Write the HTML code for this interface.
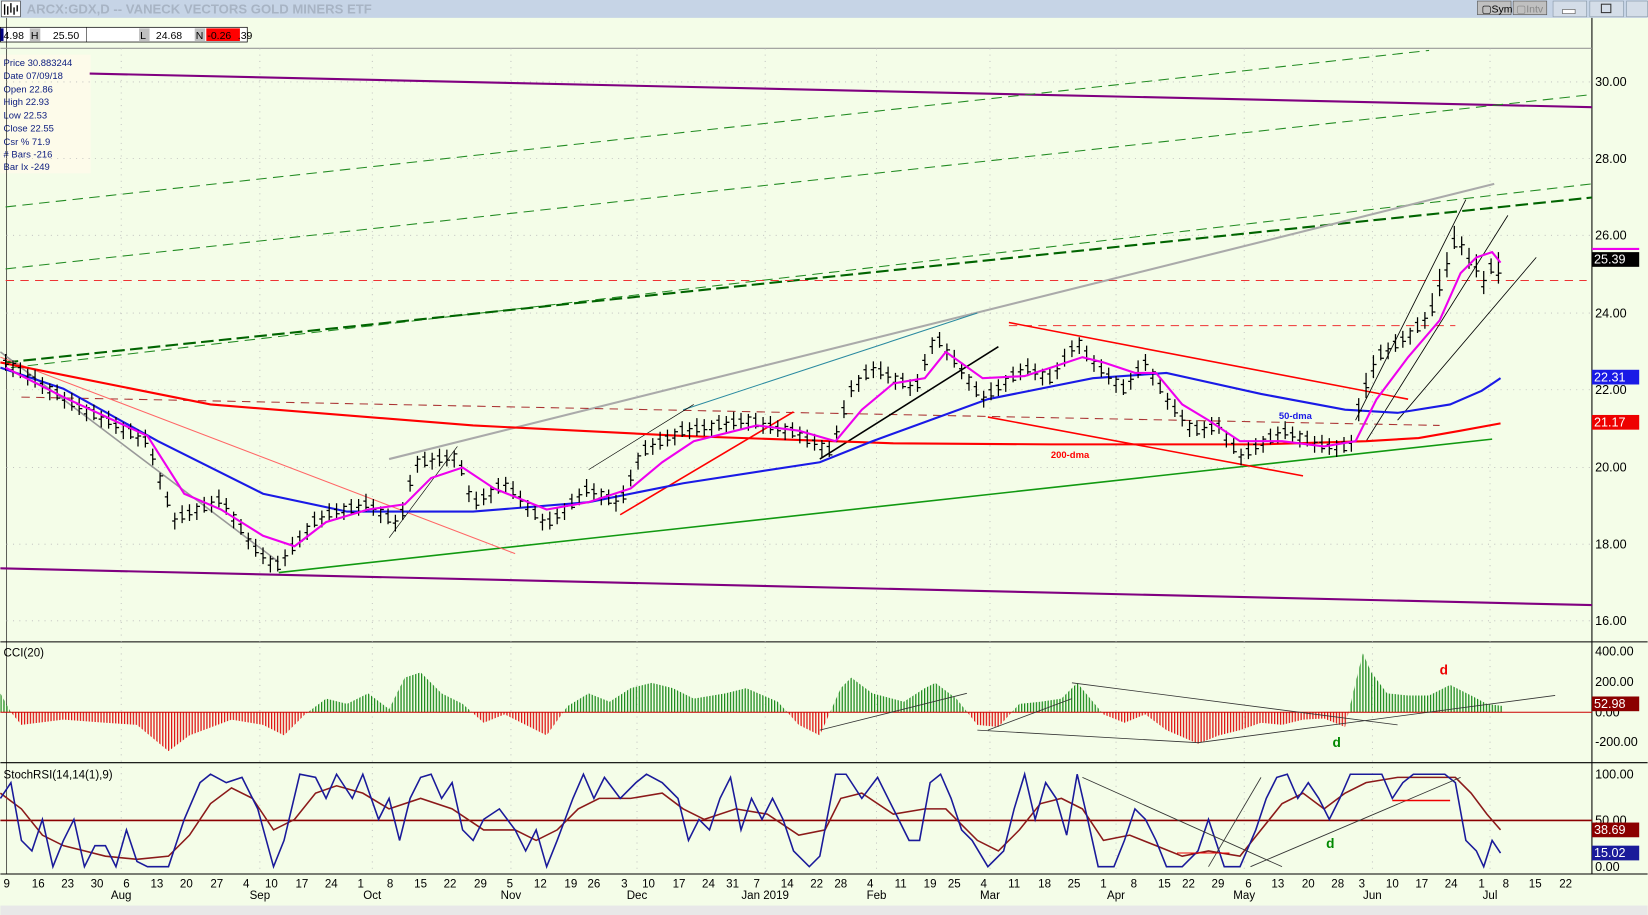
<!DOCTYPE html>
<html><head><meta charset="utf-8"><style>
html,body{margin:0;padding:0;background:#f4fde8;overflow:hidden}
svg{display:block;font-family:"Liberation Sans",sans-serif}
</style></head><body>
<svg width="1648" height="915" viewBox="0 0 1568 871" xmlns="http://www.w3.org/2000/svg">
<defs>
<pattern id="pg" width="2.8" height="10" patternUnits="userSpaceOnUse"><rect width="1.2" height="10" fill="#1a8a1a"/></pattern>
<pattern id="pr" width="2.8" height="10" patternUnits="userSpaceOnUse"><rect width="1.2" height="10" fill="#e01010"/></pattern>
<clipPath id="cu"><rect x="0" y="600" width="1515" height="78"/></clipPath>
<clipPath id="cd"><rect x="0" y="678" width="1515" height="60"/></clipPath>
</defs>
<rect width="1568" height="871" fill="#f4fde8"/>
<!-- title bar -->
<rect x="0" y="0" width="1568" height="17" fill="#c6d4e6"/>
<rect x="1" y="1" width="18" height="15" fill="#fff" stroke="#333" stroke-width="0.6"/>
<path d="M4 14V4M7 14V6M10 12V3M13 14V7M16 11V5" stroke="#000" stroke-width="1.3"/>
<text x="25" y="13" font-size="12.5" font-weight="bold" fill="#a8b4c4">ARCX:GDX,D -- VANECK VECTORS GOLD MINERS ETF</text>
<rect x="1406" y="1" width="32" height="13" fill="#c0c0c0" stroke="#555" stroke-width="0.6"/><text x="1410" y="12" font-size="10">▢Sym</text>
<rect x="1440" y="1" width="32" height="13" fill="#c0c0c0" stroke="#555" stroke-width="0.6"/><text x="1443" y="12" font-size="10" fill="#888">▢Intv</text>
<rect x="1478" y="1" width="32" height="15" fill="#d4dde8" stroke="#8899aa" stroke-width="0.6"/><rect x="1487" y="9" width="12" height="4" fill="#fff" stroke="#555" stroke-width="0.6"/>
<rect x="1513" y="1" width="32" height="15" fill="#d4dde8" stroke="#8899aa" stroke-width="0.6"/><rect x="1524" y="4" width="9" height="8" fill="none" stroke="#333" stroke-width="1"/>
<rect x="1548" y="1" width="20" height="15" fill="#d4dde8" stroke="#8899aa" stroke-width="0.6"/>
<!-- input row -->
<rect x="0" y="26" width="235" height="14" fill="#fff" stroke="#000" stroke-width="0.7"/>
<rect x="0" y="27" width="3" height="12" fill="#000080"/>
<text x="3" y="37" font-size="10">4.98</text>
<rect x="28" y="27" width="10" height="12" fill="#c0c0c0"/><text x="29" y="37" font-size="10">H</text>
<text x="50" y="37" font-size="10">25.50</text>
<line x1="82" y1="26" x2="82" y2="40" stroke="#000" stroke-width="0.5"/>
<rect x="132" y="27" width="10" height="12" fill="#c0c0c0"/><text x="133" y="37" font-size="10">L</text>
<text x="148" y="37" font-size="10">24.68</text>
<rect x="185" y="27" width="10" height="12" fill="#c0c0c0"/><text x="186" y="37" font-size="10">N</text>
<rect x="196" y="27" width="32" height="12" fill="#f00"/><text x="197" y="37" font-size="10">-0.26</text>
<text x="226" y="37" font-size="10">.39</text>
<rect x="0" y="52" width="86" height="113" fill="#fdfbea"/>
<g font-size="9" fill="#102080">
<text x="3" y="63">Price  30.883244</text><text x="3" y="75">Date  07/09/18</text><text x="3" y="88">Open  22.86</text><text x="3" y="100">High  22.93</text><text x="3" y="113">Low   22.53</text><text x="3" y="125">Close  22.55</text><text x="3" y="138">Csr %  71.9</text><text x="3" y="150"># Bars -216</text><text x="3" y="162">Bar Ix  -249</text>
</g>
<!-- panel borders -->
<g stroke="#000" stroke-width="1">
<line x1="1515" y1="17" x2="1515" y2="832"/>
<line x1="0" y1="611" x2="1568" y2="611"/>
<line x1="0" y1="726" x2="1568" y2="726"/>
<line x1="0" y1="832" x2="1568" y2="832"/>
<line x1="6" y1="17" x2="6" y2="832" stroke-width="0.6"/>
</g>
<line x1="0" y1="46" x2="1515" y2="46" stroke="#999"/>
<g stroke="#bbb" stroke-dasharray="1,5" stroke-width="0.8">
<path d="M6 78H1515M6 151H1515M6 224H1515M6 298H1515M6 371H1515M6 445H1515M6 518H1515M6 591H1515M115 46V832M247 46V832M354 46V832M486 46V832M606 46V832M728 46V832M834 46V832M942 46V832M1062 46V832M1184 46V832M1306 46V832M1418 46V832"/>
</g>
<!-- price axis -->
<g font-size="12" fill="#000">
<text x="1518" y="82">30.00</text><text x="1518" y="155">28.00</text><text x="1518" y="228">26.00</text><text x="1518" y="302">24.00</text><text x="1518" y="375">22.00</text><text x="1518" y="449">20.00</text><text x="1518" y="522">18.00</text><text x="1518" y="595">16.00</text>
</g>
<!-- trend lines -->
<g fill="none">
<line x1="85" y1="70" x2="1515" y2="102" stroke="#800080" stroke-width="2"/>
<line x1="0" y1="541" x2="1515" y2="576" stroke="#800080" stroke-width="2"/>
<line x1="5" y1="197" x2="1360" y2="48" stroke="#228b22" stroke-dasharray="10,6"/>
<line x1="5" y1="256" x2="1515" y2="90" stroke="#228b22" stroke-dasharray="10,6"/>
<line x1="10" y1="350" x2="1515" y2="175" stroke="#228b22" stroke-dasharray="10,6"/>
<line x1="5" y1="345" x2="1515" y2="188" stroke="#006400" stroke-width="2" stroke-dasharray="12,5"/>
<line x1="370" y1="437" x2="1422" y2="175" stroke="#aaa" stroke-width="2"/>
<line x1="265" y1="545" x2="1420" y2="418" stroke="#119911" stroke-width="1.5"/>
<line x1="5" y1="267" x2="1510" y2="267" stroke="#e33" stroke-dasharray="8,6"/>
<line x1="960" y1="310" x2="1385" y2="310" stroke="#e33" stroke-dasharray="8,6"/>
<line x1="20" y1="378" x2="1370" y2="405" stroke="#a33" stroke-dasharray="8,6"/>
<line x1="960" y1="307" x2="1340" y2="380" stroke="#f00" stroke-width="1.5"/>
<line x1="940" y1="397" x2="1240" y2="453" stroke="#f00" stroke-width="1.5"/>
<line x1="0" y1="340" x2="490" y2="527" stroke="#f66"/>
<line x1="0" y1="335" x2="265" y2="535" stroke="#999" stroke-width="1.5"/>
<line x1="590" y1="490" x2="755" y2="392" stroke="#f00" stroke-width="1.5"/>
<line x1="780" y1="437" x2="950" y2="330" stroke="#000" stroke-width="1.5"/>
<line x1="650" y1="390" x2="930" y2="298" stroke="#2a8aa0"/>
<line x1="1290" y1="400" x2="1395" y2="190" stroke="#000" stroke-width="0.8"/>
<line x1="1300" y1="420" x2="1435" y2="205" stroke="#000" stroke-width="0.8"/>
<line x1="1330" y1="400" x2="1462" y2="245" stroke="#000" stroke-width="0.8"/>
<line x1="370" y1="512" x2="435" y2="425" stroke="#000" stroke-width="0.6"/>
<line x1="560" y1="447" x2="660" y2="385" stroke="#000" stroke-width="0.6"/>
<polyline points="0,345 200,385 450,405 650,415 850,422 1000,423 1200,423 1300,420 1350,417 1390,410 1428,403" stroke="#f00" stroke-width="2"/>
<polyline points="0,350 60,370 150,420 250,470 330,487 450,487 560,478 650,460 780,440 830,420 940,380 1040,360 1110,355 1200,375 1280,390 1330,393 1380,385 1410,372 1428,360" stroke="#1a1ae6" stroke-width="2"/>
</g>
<!-- price bars -->
<path fill="none" stroke="#000" stroke-width="1.2" d="
M5 337v16m0-6h3m-5.5-4h2.5 M12 343v16m0-13h3m-5.5 6h2.5 M19 345v15m0-2h3m-5.5-8h2.5 M26 351v16m0-10h3m-5.5 2h2.5 M33 352v17m0-4h3m-5.5-6h2.5
M40 359v16m0-6h3m-5.5-4h2.5 M47 365v16m0-13h3m-5.5 6h2.5 M54 366v15m0-2h3m-5.5-8h2.5 M61 373v16m0-10h3m-5.5 2h2.5 M68 374v17m0-4h3m-5.5-6h2.5
M75 379v16m0-6h3m-5.5-4h2.5 M82 385v16m0-13h3m-5.5 6h2.5 M89 385v15m0-2h3m-5.5-8h2.5 M96 391v16m0-10h3m-5.5 2h2.5 M103 391v17m0-4h3m-5.5-6h2.5
M110 397v16m0-6h3m-5.5-4h2.5 M117 402v16m0-13h3m-5.5 6h2.5 M124 403v15m0-2h3m-5.5-8h2.5 M131 409v16m0-10h3m-5.5 2h2.5 M138 409v17m0-4h3m-5.5-6h2.5
M145 427v16m0-6h3m-5.5-4h2.5 M152 450v16m0-13h3m-5.5 6h2.5 M159 468v15m0-2h3m-5.5-8h2.5 M166 488v16m0-10h3m-5.5 2h2.5 M173 481v17m0-4h3m-5.5-6h2.5
M180 480v16m0-6h3m-5.5-4h2.5 M187 479v16m0-13h3m-5.5 6h2.5 M194 473v15m0-2h3m-5.5-8h2.5 M201 472v16m0-10h3m-5.5 2h2.5 M208 466v17m0-4h3m-5.5-6h2.5
M215 474v16m0-6h3m-5.5-4h2.5 M222 487v16m0-13h3m-5.5 6h2.5 M229 494v15m0-2h3m-5.5-8h2.5 M236 507v16m0-10h3m-5.5 2h2.5 M243 513v17m0-4h3m-5.5-6h2.5
M250 521v16m0-6h3m-5.5-4h2.5 M257 529v16m0-13h3m-5.5 6h2.5 M264 529v15m0-2h3m-5.5-8h2.5 M271 523v16m0-10h3m-5.5 2h2.5 M278 511v17m0-4h3m-5.5-6h2.5
M285 505v16m0-6h3m-5.5-4h2.5 M292 498v16m0-13h3m-5.5 6h2.5 M299 487v15m0-2h3m-5.5-8h2.5 M306 486v16m0-10h3m-5.5 2h2.5 M313 479v17m0-4h3m-5.5-6h2.5
M320 479v16m0-6h3m-5.5-4h2.5 M327 479v16m0-13h3m-5.5 6h2.5 M334 475v15m0-2h3m-5.5-8h2.5 M341 475v16m0-10h3m-5.5 2h2.5 M348 470v17m0-4h3m-5.5-6h2.5
M355 475v16m0-6h3m-5.5-4h2.5 M362 482v16m0-13h3m-5.5 6h2.5 M369 484v15m0-2h3m-5.5-8h2.5 M376 490v16m0-10h3m-5.5 2h2.5 M383 478v17m0-4h3m-5.5-6h2.5
M390 452v16m0-6h3m-5.5-4h2.5 M397 434v16m0-13h3m-5.5 6h2.5 M404 430v15m0-2h3m-5.5-8h2.5 M411 431v16m0-10h3m-5.5 2h2.5 M418 427v17m0-4h3m-5.5-6h2.5
M425 428v16m0-6h3m-5.5-4h2.5 M432 429v16m0-13h3m-5.5 6h2.5 M439 438v15m0-2h3m-5.5-8h2.5 M446 462v16m0-10h3m-5.5 2h2.5 M453 468v17m0-4h3m-5.5-6h2.5
M460 465v16m0-6h3m-5.5-4h2.5 M467 463v16m0-13h3m-5.5 6h2.5 M474 455v15m0-2h3m-5.5-8h2.5 M481 454v16m0-10h3m-5.5 2h2.5 M488 458v17m0-4h3m-5.5-6h2.5
M495 467v16m0-6h3m-5.5-4h2.5 M502 476v16m0-13h3m-5.5 6h2.5 M509 480v15m0-2h3m-5.5-8h2.5 M516 489v16m0-10h3m-5.5 2h2.5 M523 487v17m0-4h3m-5.5-6h2.5
M530 483v16m0-6h3m-5.5-4h2.5 M537 479v16m0-13h3m-5.5 6h2.5 M544 470v15m0-2h3m-5.5-8h2.5 M551 465v16m0-10h3m-5.5 2h2.5 M558 456v17m0-4h3m-5.5-6h2.5
M565 460v16m0-6h3m-5.5-4h2.5 M572 465v16m0-13h3m-5.5 6h2.5 M579 466v15m0-2h3m-5.5-8h2.5 M586 471v16m0-10h3m-5.5 2h2.5 M593 462v17m0-4h3m-5.5-6h2.5
M600 447v16m0-6h3m-5.5-4h2.5 M607 431v16m0-13h3m-5.5 6h2.5 M614 419v15m0-2h3m-5.5-8h2.5 M621 417v16m0-10h3m-5.5 2h2.5 M628 411v17m0-4h3m-5.5-6h2.5
M635 409v16m0-6h3m-5.5-4h2.5 M642 408v16m0-13h3m-5.5 6h2.5 M649 401v15m0-2h3m-5.5-8h2.5 M656 402v16m0-10h3m-5.5 2h2.5 M663 398v17m0-4h3m-5.5-6h2.5
M670 399v16m0-6h3m-5.5-4h2.5 M677 400v16m0-13h3m-5.5 6h2.5 M684 395v15m0-2h3m-5.5-8h2.5 M691 396v16m0-10h3m-5.5 2h2.5 M698 392v17m0-4h3m-5.5-6h2.5
M705 393v16m0-6h3m-5.5-4h2.5 M712 394v16m0-13h3m-5.5 6h2.5 M719 393v15m0-2h3m-5.5-8h2.5 M726 397v16m0-10h3m-5.5 2h2.5 M733 396v17m0-4h3m-5.5-6h2.5
M740 400v16m0-6h3m-5.5-4h2.5 M747 403v16m0-13h3m-5.5 6h2.5 M754 402v15m0-2h3m-5.5-8h2.5 M761 406v16m0-10h3m-5.5 2h2.5 M768 409v17m0-4h3m-5.5-6h2.5
M775 413v16m0-6h3m-5.5-4h2.5 M782 419v16m0-13h3m-5.5 6h2.5 M789 420v15m0-2h3m-5.5-8h2.5 M796 405v16m0-10h3m-5.5 2h2.5 M803 381v17m0-4h3m-5.5-6h2.5
M810 362v16m0-6h3m-5.5-4h2.5 M817 357v16m0-13h3m-5.5 6h2.5 M824 347v15m0-2h3m-5.5-8h2.5 M831 344v16m0-10h3m-5.5 2h2.5 M838 344v17m0-4h3m-5.5-6h2.5
M845 349v16m0-6h3m-5.5-4h2.5 M852 355v16m0-13h3m-5.5 6h2.5 M859 355v15m0-2h3m-5.5-8h2.5 M866 361v16m0-10h3m-5.5 2h2.5 M873 356v17m0-4h3m-5.5-6h2.5
M880 337v16m0-6h3m-5.5-4h2.5 M887 321v16m0-13h3m-5.5 6h2.5 M894 316v15m0-2h3m-5.5-8h2.5 M901 327v16m0-10h3m-5.5 2h2.5 M908 333v17m0-4h3m-5.5-6h2.5
M915 345v16m0-6h3m-5.5-4h2.5 M922 356v16m0-13h3m-5.5 6h2.5 M929 363v15m0-2h3m-5.5-8h2.5 M936 372v16m0-10h3m-5.5 2h2.5 M943 364v17m0-4h3m-5.5-6h2.5
M950 361v16m0-6h3m-5.5-4h2.5 M957 357v16m0-13h3m-5.5 6h2.5 M964 349v15m0-2h3m-5.5-8h2.5 M971 346v16m0-10h3m-5.5 2h2.5 M978 341v17m0-4h3m-5.5-6h2.5
M985 346v16m0-6h3m-5.5-4h2.5 M992 351v16m0-13h3m-5.5 6h2.5 M999 351v15m0-2h3m-5.5-8h2.5 M1006 345v16m0-10h3m-5.5 2h2.5 M1013 332v17m0-4h3m-5.5-6h2.5
M1020 324v16m0-6h3m-5.5-4h2.5 M1027 321v16m0-13h3m-5.5 6h2.5 M1034 329v15m0-2h3m-5.5-8h2.5 M1041 338v16m0-10h3m-5.5 2h2.5 M1048 342v17m0-4h3m-5.5-6h2.5
M1055 350v16m0-6h3m-5.5-4h2.5 M1062 358v16m0-13h3m-5.5 6h2.5 M1069 361v15m0-2h3m-5.5-8h2.5 M1076 355v16m0-10h3m-5.5 2h2.5 M1083 343v17m0-4h3m-5.5-6h2.5
M1090 337v16m0-6h3m-5.5-4h2.5 M1097 351v16m0-13h3m-5.5 6h2.5 M1104 360v15m0-2h3m-5.5-8h2.5 M1111 374v16m0-10h3m-5.5 2h2.5 M1118 380v17m0-4h3m-5.5-6h2.5
M1125 390v16m0-6h3m-5.5-4h2.5 M1132 400v16m0-13h3m-5.5 6h2.5 M1139 400v15m0-2h3m-5.5-8h2.5 M1146 401v16m0-10h3m-5.5 2h2.5 M1153 397v17m0-4h3m-5.5-6h2.5
M1160 397v16m0-6h3m-5.5-4h2.5 M1167 410v16m0-13h3m-5.5 6h2.5 M1174 417v15m0-2h3m-5.5-8h2.5 M1181 427v16m0-10h3m-5.5 2h2.5 M1188 420v17m0-4h3m-5.5-6h2.5
M1195 417v16m0-6h3m-5.5-4h2.5 M1202 415v16m0-13h3m-5.5 6h2.5 M1209 408v15m0-2h3m-5.5-8h2.5 M1216 406v16m0-10h3m-5.5 2h2.5 M1223 401v17m0-4h3m-5.5-6h2.5
M1230 406v16m0-6h3m-5.5-4h2.5 M1237 410v16m0-13h3m-5.5 6h2.5 M1244 410v15m0-2h3m-5.5-8h2.5 M1251 415v16m0-10h3m-5.5 2h2.5 M1258 414v17m0-4h3m-5.5-6h2.5
M1265 417v16m0-6h3m-5.5-4h2.5 M1272 419v16m0-13h3m-5.5 6h2.5 M1279 416v15m0-2h3m-5.5-8h2.5 M1286 414v16m0-10h3m-5.5 2h2.5 M1293 379v22m0-10h3m-5.5-6h2.5
M1300 355v24m0-10h3m-5.5-4h2.5 M1307 338v22m0-13h3m-5.5 6h2.5 M1314 328v15m0-2h3m-5.5-8h2.5 M1321 326v16m0-10h3m-5.5 2h2.5 M1328 318v17m0-4h3m-5.5-6h2.5
M1335 315v16m0-6h3m-5.5-4h2.5 M1342 312v16m0-13h3m-5.5 6h2.5 M1349 302v15m0-2h3m-5.5-8h2.5 M1356 297v16m0-10h3m-5.5 2h2.5 M1363 279v22m0-4h3m-5.5-6h2.5
M1370 256v26m0-6h3m-5.5-4h2.5 M1377 240v24m0-13h3m-5.5 6h2.5 M1384 215v22m0-2h3m-5.5-8h2.5 M1391 225v18m0-10h3m-5.5 2h2.5 M1398 236v20m0-4h3m-5.5-6h2.5
M1405 242v22m0-6h3m-5.5-4h2.5 M1412 258v22m0-13h3m-5.5 6h2.5 M1419 246v15m0-2h3m-5.5-8h2.5 M1426 240v30m0-10h3m-5.5 2h2.5"/>
<polyline fill="none" stroke="#ee00ee" stroke-width="2" points="5,350 60,378 140,415 175,470 210,485 250,510 280,520 310,497 350,485 385,480 410,455 440,445 470,465 520,485 560,478 600,465 630,440 660,420 720,405 760,410 795,420 820,390 850,365 880,360 900,335 935,360 975,358 1000,350 1030,340 1050,345 1080,355 1100,355 1125,385 1150,400 1180,420 1220,420 1260,425 1290,420 1310,380 1340,340 1370,305 1390,260 1405,245 1420,240 1428,250"/>
<text x="1000" y="436" font-size="9" font-weight="bold" fill="#f00">200-dma</text>
<text x="1217" y="399" font-size="9" font-weight="bold" fill="#1a1ae6">50-dma</text>
<line x1="1515" y1="237" x2="1560" y2="237" stroke="#ee00ee" stroke-width="2"/>
<rect x="1515" y="240" width="45" height="14" fill="#000"/><text x="1517" y="251" font-size="12" fill="#fff">25.39</text>
<rect x="1515" y="352" width="45" height="14" fill="#1a1ae6"/><text x="1517" y="363" font-size="12" fill="#fff">22.31</text>
<rect x="1515" y="395" width="45" height="14" fill="#e00"/><text x="1517" y="406" font-size="12" fill="#fff">21.17</text>
<!-- CCI -->
<text x="3" y="625" font-size="11">CCI(20)</text>
<g>
<polygon id="cc" points="0,678 0,660 10,678 20,690 60,685 100,688 130,690 160,715 180,700 220,685 250,690 270,700 290,680 310,665 330,670 350,660 370,675 385,645 400,640 420,660 440,670 460,688 480,680 500,690 520,700 540,672 560,660 580,668 600,655 620,650 640,655 660,665 690,660 710,655 740,668 760,690 780,700 800,655 810,645 830,660 860,668 880,655 890,650 910,665 930,690 950,692 970,670 990,668 1010,665 1025,650 1050,680 1070,688 1090,680 1110,695 1140,708 1160,700 1180,695 1200,688 1220,690 1240,685 1260,684 1280,692 1290,650 1297,622 1305,640 1320,660 1340,662 1360,662 1380,652 1400,662 1415,670 1430,672 1430,678" fill="url(#pg)" clip-path="url(#cu)"/>
<polygon points="0,678 0,660 10,678 20,690 60,685 100,688 130,690 160,715 180,700 220,685 250,690 270,700 290,680 310,665 330,670 350,660 370,675 385,645 400,640 420,660 440,670 460,688 480,680 500,690 520,700 540,672 560,660 580,668 600,655 620,650 640,655 660,665 690,660 710,655 740,668 760,690 780,700 800,655 810,645 830,660 860,668 880,655 890,650 910,665 930,690 950,692 970,670 990,668 1010,665 1025,650 1050,680 1070,688 1090,680 1110,695 1140,708 1160,700 1180,695 1200,688 1220,690 1240,685 1260,684 1280,692 1290,650 1297,622 1305,640 1320,660 1340,662 1360,662 1380,652 1400,662 1415,670 1430,672 1430,678" fill="url(#pr)" clip-path="url(#cd)"/>
</g>
<line x1="0" y1="678" x2="1515" y2="678" stroke="#c00"/>
<g font-size="12"><text x="1518" y="624">400.00</text><text x="1518" y="653">200.00</text><text x="1518" y="682">0.00</text><text x="1518" y="710">-200.00</text></g>
<rect x="1515" y="663" width="45" height="14" fill="#8b0000"/><text x="1517" y="674" font-size="12" fill="#fff">52.98</text>
<g stroke="#333" stroke-width="0.8">
<line x1="930" y1="695" x2="1140" y2="707"/><line x1="1140" y1="707" x2="1480" y2="662"/><line x1="1020" y1="650" x2="1330" y2="690"/><line x1="780" y1="695" x2="920" y2="660"/><line x1="940" y1="695" x2="1020" y2="665"/>
</g>
<text x="1370" y="642" font-size="13" font-weight="bold" fill="#e00">d</text>
<text x="1268" y="711" font-size="13" font-weight="bold" fill="#080">d</text>
<!-- StochRSI -->
<text x="3" y="741" font-size="11">StochRSI(14,14(1),9)</text>
<line x1="0" y1="781" x2="1515" y2="781" stroke="#8b0000" stroke-width="1.5"/>
<polyline fill="none" stroke="#8b1a1a" stroke-width="1.5" points="0,755 20,770 40,795 60,805 80,810 100,815 130,818 160,815 180,795 200,765 220,750 240,760 260,790 280,780 300,755 320,748 345,755 370,770 400,760 430,770 460,790 490,790 510,800 530,790 550,770 570,760 600,760 630,755 650,770 670,780 700,770 730,775 760,795 785,790 800,760 820,755 850,775 880,770 900,770 930,800 950,810 970,790 990,765 1010,760 1030,770 1050,800 1075,795 1100,805 1125,815 1150,810 1180,815 1200,790 1220,765 1240,755 1260,770 1280,755 1300,745 1330,740 1360,740 1385,740 1400,755 1415,775 1428,790"/>
<polyline fill="none" stroke="#1a1a9a" stroke-width="1.5" points="0,760 10,745 20,800 30,810 40,780 50,825 60,800 70,780 80,825 90,805 100,805 110,825 120,790 130,820 140,825 150,825 160,825 175,780 190,745 200,737 215,745 230,740 245,770 260,825 270,800 285,737 300,740 310,760 320,737 335,760 345,737 360,780 370,760 380,800 390,760 400,740 410,737 420,760 430,745 440,790 450,800 460,780 475,770 490,790 500,810 510,790 520,825 530,800 545,760 555,737 565,760 575,740 590,760 605,745 615,737 630,745 645,760 655,800 665,780 675,790 685,760 695,740 705,790 715,760 725,780 735,760 745,780 755,810 770,825 780,815 795,737 805,737 820,760 835,740 850,770 865,800 875,800 885,745 895,737 905,760 915,790 925,800 940,825 955,810 965,770 975,737 985,780 995,745 1005,760 1015,795 1025,737 1035,780 1045,825 1060,825 1070,800 1080,770 1090,780 1100,800 1110,825 1125,825 1140,810 1150,780 1165,825 1180,825 1195,790 1205,760 1215,740 1225,737 1235,760 1245,745 1255,760 1265,780 1275,760 1285,737 1300,737 1315,737 1325,760 1335,745 1345,737 1360,737 1375,737 1385,745 1395,800 1405,810 1412,825 1420,800 1428,812"/>
<g stroke="#333" stroke-width="0.8"><line x1="1030" y1="740" x2="1220" y2="825"/><line x1="1150" y1="825" x2="1200" y2="740"/><line x1="1190" y1="825" x2="1390" y2="740"/></g>
<line x1="1325" y1="762" x2="1380" y2="762" stroke="#e00" stroke-width="1.5"/><line x1="1120" y1="812" x2="1170" y2="812" stroke="#e00"/>
<text x="1262" y="807" font-size="13" font-weight="bold" fill="#080">d</text>
<g font-size="12"><text x="1518" y="741">100.00</text><text x="1518" y="785">50.00</text><text x="1518" y="829">0.00</text></g>
<rect x="1515" y="783" width="45" height="14" fill="#8b0000"/><text x="1517" y="794" font-size="12" fill="#fff">38.69</text>
<rect x="1515" y="805" width="45" height="14" fill="#1a1a9a"/><text x="1517" y="816" font-size="12" fill="#fff">15.02</text>
<!-- dates -->
<g font-size="11" text-anchor="middle">
<text x="6" y="845">9</text><text x="36" y="845">16</text><text x="64" y="845">23</text><text x="92" y="845">30</text><text x="120" y="845">6</text><text x="149" y="845">13</text><text x="177" y="845">20</text><text x="206" y="845">27</text><text x="234" y="845">4</text><text x="258" y="845">10</text><text x="287" y="845">17</text><text x="315" y="845">24</text><text x="343" y="845">1</text><text x="371" y="845">8</text><text x="400" y="845">15</text><text x="428" y="845">22</text><text x="457" y="845">29</text><text x="485" y="845">5</text><text x="514" y="845">12</text><text x="543" y="845">19</text><text x="565" y="845">26</text><text x="594" y="845">3</text><text x="617" y="845">10</text><text x="646" y="845">17</text><text x="674" y="845">24</text><text x="697" y="845">31</text><text x="720" y="845">7</text><text x="749" y="845">14</text><text x="777" y="845">22</text><text x="800" y="845">28</text><text x="828" y="845">4</text><text x="857" y="845">11</text><text x="885" y="845">19</text><text x="908" y="845">25</text><text x="936" y="845">4</text><text x="965" y="845">11</text><text x="994" y="845">18</text><text x="1022" y="845">25</text><text x="1050" y="845">1</text><text x="1079" y="845">8</text><text x="1108" y="845">15</text><text x="1131" y="845">22</text><text x="1159" y="845">29</text><text x="1188" y="845">6</text><text x="1216" y="845">13</text><text x="1245" y="845">20</text><text x="1273" y="845">28</text><text x="1296" y="845">3</text><text x="1325" y="845">10</text><text x="1353" y="845">17</text><text x="1381" y="845">24</text><text x="1410" y="845">1</text><text x="1433" y="845">8</text><text x="1461" y="845">15</text><text x="1490" y="845">22</text>
<text x="115" y="856">Aug</text><text x="247" y="856">Sep</text><text x="354" y="856">Oct</text><text x="486" y="856">Nov</text><text x="606" y="856">Dec</text><text x="728" y="856">Jan 2019</text><text x="834" y="856">Feb</text><text x="942" y="856">Mar</text><text x="1062" y="856">Apr</text><text x="1184" y="856">May</text><text x="1306" y="856">Jun</text><text x="1418" y="856">Jul</text>
</g>
<rect x="0" y="862" width="1568" height="9" fill="#e8e8e8"/>
</svg>
</body></html>
